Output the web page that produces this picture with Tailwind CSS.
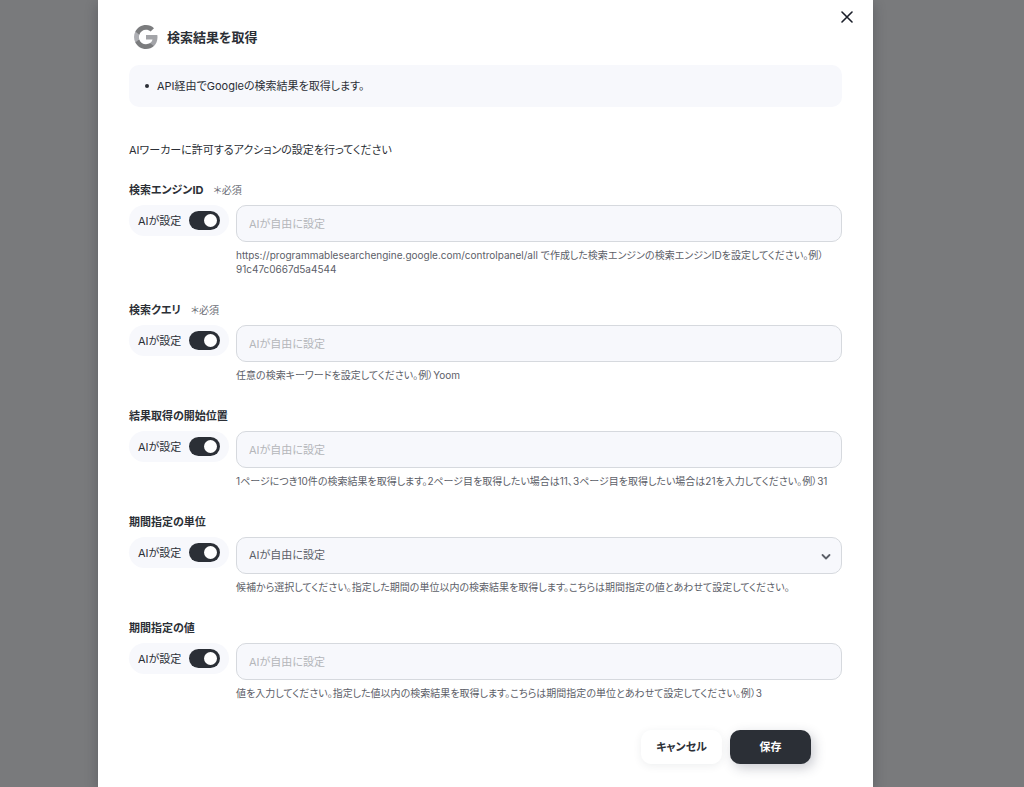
<!DOCTYPE html>
<html lang="ja">
<head>
<meta charset="utf-8">
<meta name="viewport" content="width=device-width, initial-scale=1">
<title>検索結果を取得</title>
<script src="https://cdn.jsdelivr.net/npm/@tailwindcss/browser@4"></script>
</head>
<body class="min-h-screen overflow-x-hidden bg-[#797a7c] font-['Inter','Noto_Sans_CJK_JP',sans-serif] text-[#2b2f36] [font-feature-settings:'palt']">
<main role="dialog" aria-labelledby="title" class="relative mr-[151px] ml-[98px] min-h-screen bg-white px-[31px] pt-6 pb-[22px] shadow-[0_4px_12px_rgba(30,34,42,0.3)]">
  <button type="button" aria-label="閉じる" class="absolute top-2 right-[17px] flex size-[18px] items-center justify-center">
    <svg class="size-3" viewBox="0 0 12 12" fill="none" stroke="#1b1f2a" stroke-width="1.6" stroke-linecap="round"><path d="M1 1l10 10M11 1L1 11"/></svg>
  </button>

  <header class="flex items-center gap-[9px] pl-[5px]">
    <svg class="h-[26px] w-6" viewBox="0 0 24 24" aria-hidden="true">
      <path fill="#a3a4a8" d="M23.5 12.3c0-.8-.1-1.600-.2-2.300H12v4.500h6.500c-.3 1.500-1.100 2.700-2.400 3.600v3h3.900c2.200-2.100 3.500-5.200 3.500-8.800z"/>
      <path fill="#7b7c7e" d="M12 24c3.200 0 5.900-1.100 7.900-2.900l-3.900-3c-1.100.7-2.400 1.200-4 1.200-3.100 0-5.800-2.100-6.700-4.900h-4v3.100C3.300 21.300 7.300 24 12 24z"/>
      <path fill="#aeafb4" d="M5.300 14.300c-.5-1.500-.5-3.100 0-4.600V6.600h-4c-1.700 3.400-1.700 7.400 0 10.800z"/>
      <path fill="#7b7c7e" d="M12 4.800c1.800 0 3.300.6 4.600 1.800L20 3.200C17.900 1.200 15.200 0 12 0 7.300 0 3.300 2.700 1.300 6.600l4 3.100c.9-2.800 3.600-4.900 6.700-4.900z"/>
    </svg>
    <h1 id="title" class="text-[13px] leading-5 font-bold">検索結果を取得</h1>
  </header>

  <ul class="mt-[15px] list-none rounded-[10px] bg-[#f7f8fc] px-4 py-[11px]">
    <li class="flex items-center gap-2 text-[11px] leading-5"><span class="size-1 rounded-full bg-[#2b2f36]"></span>API経由でGoogleの検索結果を取得します。</li>
  </ul>

  <p class="mt-[33px] text-[11px] leading-5">AIワーカーに許可するアクションの設定を行ってください</p>

  <form>
    <div class="mt-[22px] flex flex-col gap-[26px]">

      <section>
        <div class="flex h-4 items-center gap-[10px]"><label for="engine" class="text-[11px] leading-4 font-bold">検索エンジンID</label><span class="text-[10px] leading-4 text-[#6b6e76]">＊必須</span></div>
        <div class="mt-[7px] flex items-start gap-[7px]">
          <label class="flex h-[31px] w-[100px] shrink-0 items-center justify-between rounded-full bg-[#f7f8fc] px-[9px] text-[11px] leading-4">AIが設定<input type="checkbox" checked class="h-[19px] w-[31px] appearance-none rounded-full bg-[#2b2f36] p-[3px] before:block before:size-[13px] before:rounded-full before:bg-white checked:before:ml-3"></label>
          <div class="min-w-0 flex-1">
            <input id="engine" type="text" placeholder="AIが自由に設定" class="block h-[37px] w-full rounded-[10px] border border-[#d6d9de] bg-[#f7f8fc] px-3 text-[11px] placeholder:text-[#b4b6ba]">
            <p class="mt-[6px] text-[10px] leading-[14px] text-[#5c6068]">https://programmablesearchengine.google.com/controlpanel/all で作成した検索エンジンの検索エンジンIDを設定してください。例）<br>91c47c0667d5a4544</p>
          </div>
        </div>
      </section>

      <section>
        <div class="flex h-4 items-center gap-[10px]"><label for="query" class="text-[11px] leading-4 font-bold">検索クエリ</label><span class="text-[10px] leading-4 text-[#6b6e76]">＊必須</span></div>
        <div class="mt-[7px] flex items-start gap-[7px]">
          <label class="flex h-[31px] w-[100px] shrink-0 items-center justify-between rounded-full bg-[#f7f8fc] px-[9px] text-[11px] leading-4">AIが設定<input type="checkbox" checked class="h-[19px] w-[31px] appearance-none rounded-full bg-[#2b2f36] p-[3px] before:block before:size-[13px] before:rounded-full before:bg-white checked:before:ml-3"></label>
          <div class="min-w-0 flex-1">
            <input id="query" type="text" placeholder="AIが自由に設定" class="block h-[37px] w-full rounded-[10px] border border-[#d6d9de] bg-[#f7f8fc] px-3 text-[11px] placeholder:text-[#b4b6ba]">
            <p class="mt-[6px] text-[10px] leading-[14px] text-[#5c6068]">任意の検索キーワードを設定してください。例）Yoom</p>
          </div>
        </div>
      </section>

      <section>
        <div class="flex h-4 items-center"><label for="start" class="text-[11px] leading-4 font-bold">結果取得の開始位置</label></div>
        <div class="mt-[7px] flex items-start gap-[7px]">
          <label class="flex h-[31px] w-[100px] shrink-0 items-center justify-between rounded-full bg-[#f7f8fc] px-[9px] text-[11px] leading-4">AIが設定<input type="checkbox" checked class="h-[19px] w-[31px] appearance-none rounded-full bg-[#2b2f36] p-[3px] before:block before:size-[13px] before:rounded-full before:bg-white checked:before:ml-3"></label>
          <div class="min-w-0 flex-1">
            <input id="start" type="text" placeholder="AIが自由に設定" class="block h-[37px] w-full rounded-[10px] border border-[#d6d9de] bg-[#f7f8fc] px-3 text-[11px] placeholder:text-[#b4b6ba]">
            <p class="mt-[6px] text-[10px] leading-[14px] text-[#5c6068]">1ページにつき10件の検索結果を取得します。2ページ目を取得したい場合は11、3ページ目を取得したい場合は21を入力してください。例）31</p>
          </div>
        </div>
      </section>

      <section>
        <div class="flex h-4 items-center"><label for="unit" class="text-[11px] leading-4 font-bold">期間指定の単位</label></div>
        <div class="mt-[7px] flex items-start gap-[7px]">
          <label class="flex h-[31px] w-[100px] shrink-0 items-center justify-between rounded-full bg-[#f7f8fc] px-[9px] text-[11px] leading-4">AIが設定<input type="checkbox" checked class="h-[19px] w-[31px] appearance-none rounded-full bg-[#2b2f36] p-[3px] before:block before:size-[13px] before:rounded-full before:bg-white checked:before:ml-3"></label>
          <div class="min-w-0 flex-1">
            <div class="relative">
              <select id="unit" class="block h-[37px] w-full appearance-none rounded-[10px] border border-[#d6d9de] bg-[#f7f8fc] px-3 text-[11px] text-[#5c6068]"><option>AIが自由に設定</option></select>
              <svg class="pointer-events-none absolute top-4 right-[11px] h-2 w-[10px]" viewBox="0 0 10 8" fill="none" stroke="#5c6068" stroke-width="1.8" stroke-linecap="round" stroke-linejoin="round"><path d="M1.500 2l3.500 3.500L8.500 2"/></svg>
            </div>
            <p class="mt-[6px] text-[10px] leading-[14px] text-[#5c6068]">候補から選択してください。指定した期間の単位以内の検索結果を取得します。こちらは期間指定の値とあわせて設定してください。</p>
          </div>
        </div>
      </section>

      <section>
        <div class="flex h-4 items-center"><label for="value" class="text-[11px] leading-4 font-bold">期間指定の値</label></div>
        <div class="mt-[7px] flex items-start gap-[7px]">
          <label class="flex h-[31px] w-[100px] shrink-0 items-center justify-between rounded-full bg-[#f7f8fc] px-[9px] text-[11px] leading-4">AIが設定<input type="checkbox" checked class="h-[19px] w-[31px] appearance-none rounded-full bg-[#2b2f36] p-[3px] before:block before:size-[13px] before:rounded-full before:bg-white checked:before:ml-3"></label>
          <div class="min-w-0 flex-1">
            <input id="value" type="text" placeholder="AIが自由に設定" class="block h-[37px] w-full rounded-[10px] border border-[#d6d9de] bg-[#f7f8fc] px-3 text-[11px] placeholder:text-[#b4b6ba]">
            <p class="mt-[6px] text-[10px] leading-[14px] text-[#5c6068]">値を入力してください。指定した値以内の検索結果を取得します。こちらは期間指定の単位とあわせて設定してください。例）3</p>
          </div>
        </div>
      </section>
    </div>

    <div class="mt-[30px] flex justify-end gap-2 pr-[31px]">
      <button type="button" class="h-[34px] w-[81px] rounded-[10px] bg-white text-[11px] font-bold shadow-[0_2px_8px_rgba(43,47,70,0.08)]">キャンセル</button>
      <button type="submit" class="h-[34px] w-[81px] rounded-[10px] bg-[#2b2f36] text-[11px] font-bold text-white shadow-[3px_4px_12px_rgba(43,47,70,0.25)]">保存</button>
    </div>
  </form>
</main>
</body>
</html>
